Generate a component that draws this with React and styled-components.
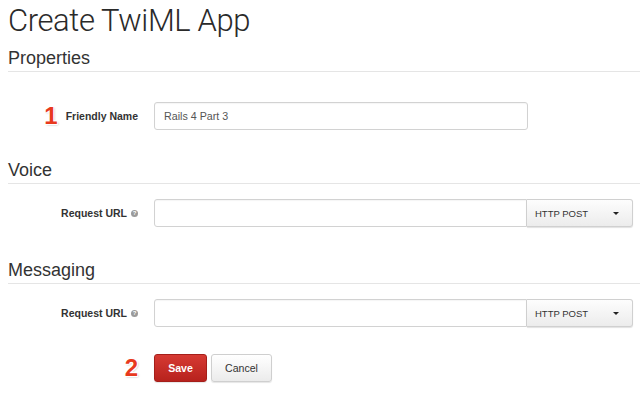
import React from "react";
import styled, { createGlobalStyle } from "styled-components";

const Global = createGlobalStyle`
  html, body { margin: 0; padding: 0; background: #fff; }
  body { font-family: "Liberation Sans", Arial, sans-serif; color: #333; }
  * { box-sizing: border-box; }
`;

const Page = styled.div`
  width: 640px;
  height: 394px;
  overflow: hidden;
  padding-left: 8px;
  display: flex;
  flex-direction: column;
`;

const Title = styled.h1`
  margin: 3px 0 0;
  font-family: Roboto, "Liberation Sans", Arial, sans-serif;
  font-size: 31px;
  line-height: 36px;
  font-weight: 300;
  letter-spacing: -0.4px;
  color: #2a2a2a;
`;

const SectionHeading = styled.h2`
  margin: ${(p) => p.$top}px 0 0;
  font-size: 18px;
  line-height: 20px;
  font-weight: 400;
  color: #333;
  padding-bottom: 3px;
  border-bottom: 1px solid #e5e5e5;
`;

const Row = styled.div`
  margin-top: ${(p) => p.$top}px;
  display: grid;
  grid-template-columns: 130px auto;
  column-gap: 16px;
  align-items: center;
`;

const LabelCell = styled.div`
  display: flex;
  justify-content: flex-end;
  align-items: center;
  gap: ${(p) => p.$gap ?? 4}px;
`;

const Label = styled.label`
  font-size: 10.5px;
  font-weight: 700;
  color: #333;
`;

const Marker = styled.span`
  font-size: 24px;
  line-height: 22px;
  font-weight: 700;
  color: #e8391d;
  text-shadow:
    -1px -1px 0 #fff, 1px -1px 0 #fff, -1px 1px 0 #fff, 1px 1px 0 #fff,
    1px 1px 2px rgba(0, 0, 0, 0.35);
`;

const Help = styled.span`
  width: 7px;
  height: 7px;
  border-radius: 50%;
  background: #9a9a9a;
  color: #fff;
  font-size: 6px;
  line-height: 7px;
  font-weight: 700;
  text-align: center;
  display: inline-block;
`;

const Field = styled.div`
  display: flex;
  align-items: stretch;
  height: 28px;
`;

const TextInput = styled.input`
  width: ${(p) => p.$width}px;
  height: 28px;
  border: 1px solid #d2d2d2;
  border-radius: ${(p) => (p.$joined ? "3px 0 0 3px" : "3px")};
  box-shadow: inset 0 1px 1px rgba(0, 0, 0, 0.04);
  padding: 0 9px;
  font-family: "Liberation Sans", Arial, sans-serif;
  font-size: 10.7px;
  color: #555;
  background: #fff;
  outline: none;
`;

const Dropdown = styled.button`
  width: 106px;
  height: 28px;
  border: 1px solid #d0d0d0;
  border-left: none;
  border-radius: 0 3px 3px 0;
  background: linear-gradient(#fdfdfd, #ececec);
  box-shadow: 0 1px 1px rgba(0, 0, 0, 0.12);
  display: flex;
  align-items: center;
  justify-content: space-between;
  padding: 0 13px 0 8px;
  font-family: "Liberation Sans", Arial, sans-serif;
  font-size: 9.5px;
  color: #333;
`;

const Caret = styled.span`
  width: 0;
  height: 0;
  border-left: 3px solid transparent;
  border-right: 3px solid transparent;
  border-top: 3.5px solid #222;
`;

const Buttons = styled.div`
  display: flex;
  gap: 4px;
`;

const Button = styled.button`
  height: 28px;
  width: ${(p) => p.$width}px;
  border-radius: 3px;
  font-family: "Liberation Sans", Arial, sans-serif;
  font-size: 10.6px;
  padding: 0;
  ${(p) =>
    p.$primary
      ? `
    background: linear-gradient(#d63a33, #b7221d);
    border: 1px solid #a51f1a;
    color: #fff;
    font-weight: 700;
  `
      : `
    background: linear-gradient(#ffffff, #ebebeb);
    border: 1px solid #cfcfcf;
    color: #333;
    font-weight: 400;
  `}
  box-shadow: 0 1px 1px rgba(0, 0, 0, 0.1);
`;

function UrlRow({ top }) {
  return (
    <Row $top={top}>
      <LabelCell>
        <Label>Request URL</Label>
        <Help>?</Help>
      </LabelCell>
      <Field>
        <TextInput $width={373} $joined defaultValue="" />
        <Dropdown>
          HTTP POST
          <Caret />
        </Dropdown>
      </Field>
    </Row>
  );
}

export default function App() {
  return (
    <>
      <Global />
      <Page>
        <Title>Create TwiML App</Title>
        <SectionHeading $top={9}>Properties</SectionHeading>
        <Row $top={30}>
          <LabelCell $gap={8}>
            <Marker>1</Marker>
            <Label>Friendly Name</Label>
          </LabelCell>
          <Field>
            <TextInput $width={374} defaultValue="Rails 4 Part 3" />
          </Field>
        </Row>

        <SectionHeading $top={30}>Voice</SectionHeading>
        <UrlRow top={15} />

        <SectionHeading $top={33}>Messaging</SectionHeading>
        <UrlRow top={15} />

        <Row $top={27}>
          <LabelCell $gap={14}>
            <Marker>2</Marker>
          </LabelCell>
          <Buttons>
            <Button $primary $width={53}>Save</Button>
            <Button $width={61}>Cancel</Button>
          </Buttons>
        </Row>
      </Page>
    </>
  );
}
